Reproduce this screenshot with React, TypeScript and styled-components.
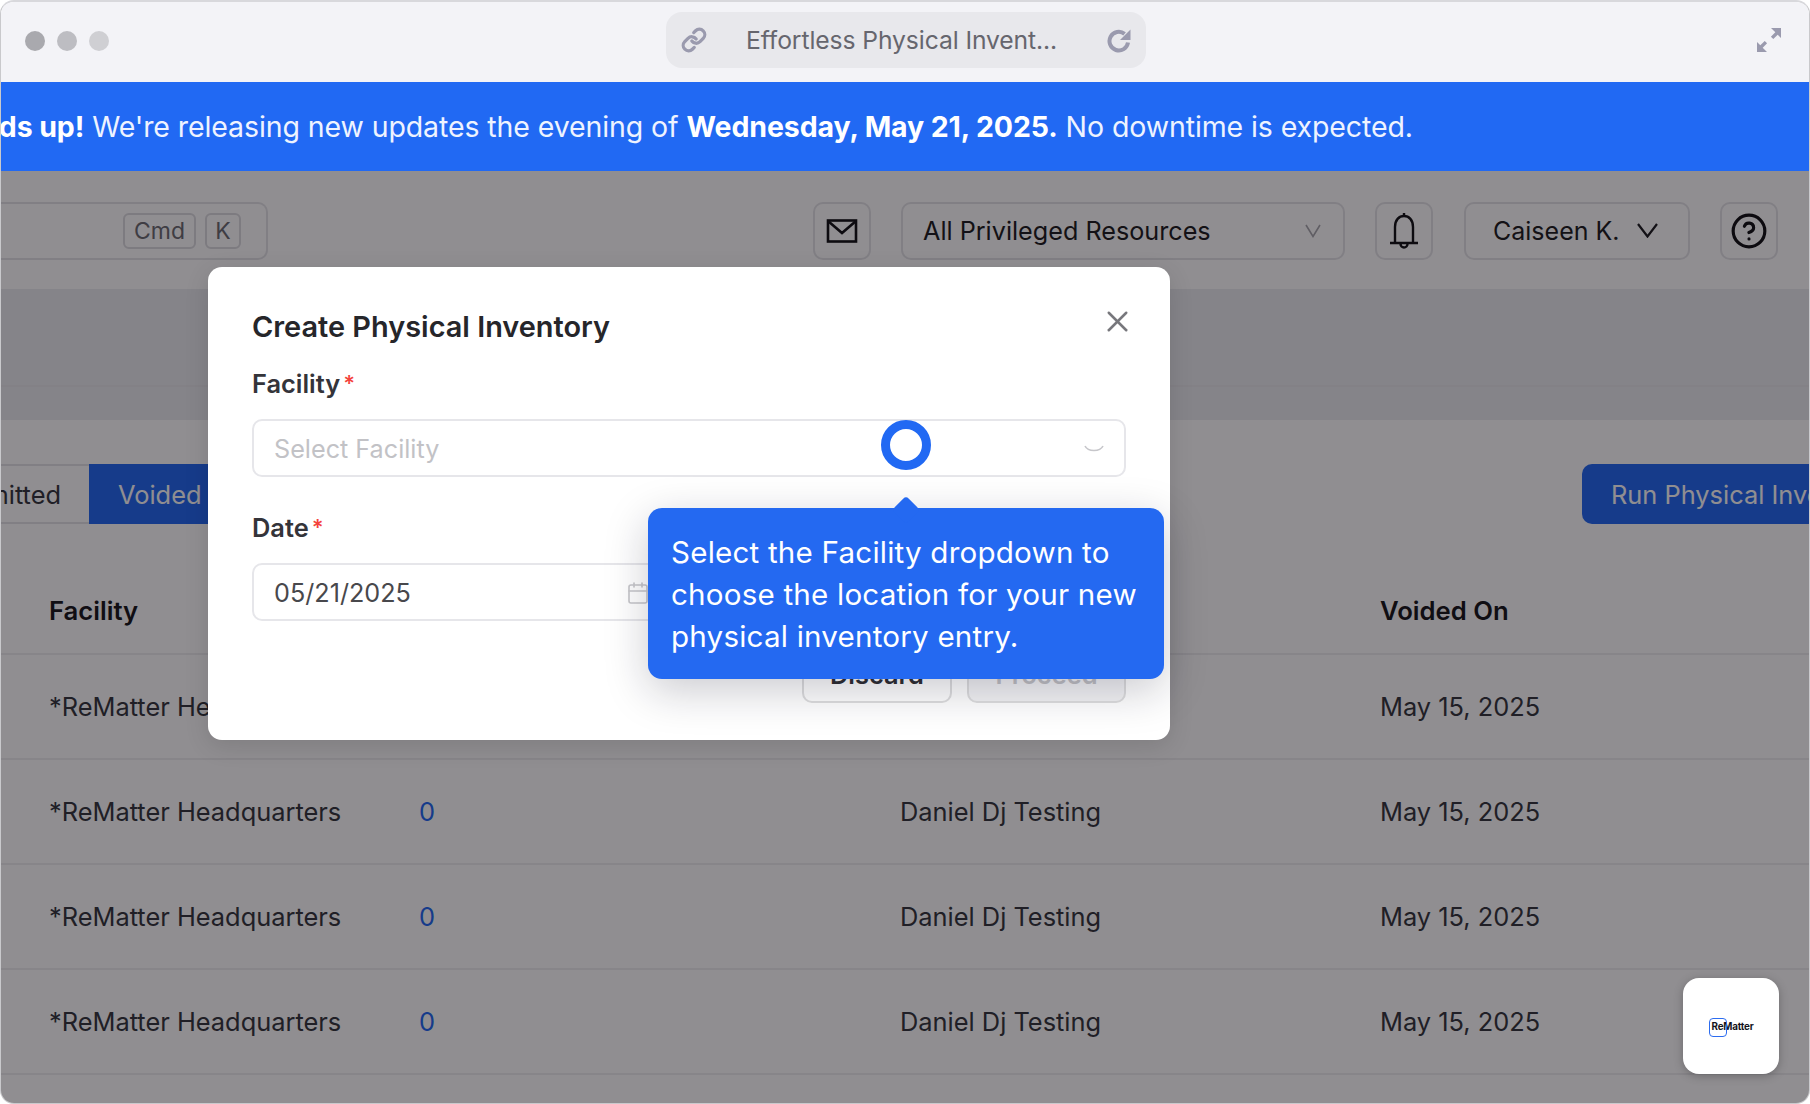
import React from "react";
import styled, { createGlobalStyle } from "styled-components";
import { Calendar, CircleHelp, Link, X } from "lucide-react";

const Global = createGlobalStyle`
  html, body { margin: 0; padding: 0; background: #ffffff; }
  * { box-sizing: border-box; }
  body { font-family: Inter, "Liberation Sans", sans-serif; }
`;

const Window = styled.div`
  position: relative;
  width: 1810px;
  height: 1104px;
  display: flex;
  flex-direction: column;
  overflow: hidden;
  border-radius: 14px;
  border: 1px solid #c9c9cc;
  border-top: 2px solid #d8d8dc;
  background: #fff;
`;

const Chrome = styled.header`
  height: 80px;
  flex: none;
  background: #f3f3f7;
  display: flex;
  align-items: center;
  padding: 0 27px 0 24px;
  position: relative;
`;

const Lights = styled.div`
  display: flex;
  gap: 12px;
  flex: none;
  margin-top: -2px;
`;

const Light = styled.span<{ $c: string }>`
  width: 20px;
  height: 20px;
  border-radius: 50%;
  background: ${(p) => p.$c};
`;

const AddressBar = styled.div`
  width: 480px;
  height: 56px;
  margin-left: 557px;
  margin-top: -4px;
  border-radius: 16px;
  background: #e8e8ec;
  display: flex;
  align-items: center;
  padding: 0 14px 0 15px;
  color: #9a9aae;
`;

const AddressText = styled.span`
  flex: 1;
  margin-left: 39px;
  font-size: 24.7px;
  letter-spacing: -0.1px;
  color: #66666e;
  white-space: nowrap;
`;

const ExpandIcon = styled.svg`
  margin-left: auto;
  margin-top: -4px;
  color: #9a9aae;
`;

const Banner = styled.div`
  height: 89px;
  flex: none;
  background: #2169f3;
  color: #eef3ff;
  display: flex;
  align-items: center;
  font-size: 28.5px;
  letter-spacing: -0.1px;
  white-space: nowrap;
  overflow: hidden;
`;

const BannerText = styled.span`
  margin-left: -57px;
  b { font-weight: 700; color: #fff; }
`;

const AppArea = styled.main`
  position: relative;
  flex: 1;
  min-height: 0;
  display: flex;
  flex-direction: column;
`;

const Topbar = styled.div`
  height: 118px;
  flex: none;
  display: flex;
  align-items: center;
  gap: 30px;
  padding: 1px 31px 0 0;
`;

const SearchBox = styled.div`
  width: 267px;
  height: 58px;
  border: 2px solid #e4e4e8;
  border-left: none;
  border-radius: 0 10px 10px 0;
  display: flex;
  align-items: center;
  justify-content: flex-end;
  gap: 9px;
  padding-right: 25px;
  margin-right: auto;
`;

const Kbd = styled.span<{ $w: number }>`
  width: ${(p) => p.$w}px;
  height: 36px;
  border: 2px solid #dcdce0;
  border-radius: 6px;
  display: flex;
  align-items: center;
  justify-content: center;
  font-size: 23px;
  color: #6c6c72;
`;

const IconButton = styled.button`
  width: 58px;
  height: 58px;
  padding: 0;
  flex: none;
  background: transparent;
  border: 2px solid #e4e4e8;
  border-radius: 10px;
  display: flex;
  align-items: center;
  justify-content: center;
  color: #111114;
`;

const ResourceSelect = styled.div`
  width: 444px;
  height: 58px;
  border: 2px solid #e4e4e8;
  border-radius: 10px;
  display: flex;
  align-items: center;
  justify-content: space-between;
  padding: 0 22px 0 20px;
  font-size: 25.2px;
  color: #1c1c20;
  svg { color: #a8a8ae; }
`;

const UserButton = styled.div`
  width: 226px;
  height: 58px;
  margin-left: 1px;
  border: 2px solid #e4e4e8;
  border-radius: 10px;
  display: flex;
  align-items: center;
  justify-content: space-between;
  padding: 0 30px 0 27px;
  font-size: 25px;
  color: #1c1c20;
`;

const Strip = styled.div<{ $h: number; $line?: boolean }>`
  height: ${(p) => p.$h}px;
  flex: none;
  background: #ebedf1;
  ${(p) => (p.$line ? "border-bottom: 2px solid #e7e8ec;" : "")}
`;

const TabsRow = styled.div`
  flex: none;
  display: flex;
  align-items: stretch;
  height: 60px;
  margin-top: 44px;
  margin-bottom: 43px;
`;

const Tab = styled.div<{ $active?: boolean }>`
  height: 60px;
  display: flex;
  align-items: center;
  font-size: 25.4px;
  white-space: nowrap;
  overflow: hidden;
  flex: none;
  justify-content: ${(p) => (p.$active ? "flex-start" : "flex-end")};
  width: ${(p) => (p.$active ? "140px" : "88px")};
  padding: ${(p) => (p.$active ? "0 10px 0 29px" : "0 28px 0 0")};
  background: ${(p) => (p.$active ? "#2169f3" : "transparent")};
  color: ${(p) => (p.$active ? "#ffffff" : "#33363c")};
  border-top: ${(p) => (p.$active ? "0" : "2px solid #e4e4e8")};
  border-bottom: ${(p) => (p.$active ? "0" : "2px solid #e4e4e8")};
`;

const RunButton = styled.div`
  margin-left: auto;
  margin-right: -113px;
  flex: none;
  width: 340px;
  height: 60px;
  background: #2169f3;
  color: #fff;
  border-radius: 10px;
  display: flex;
  align-items: center;
  padding: 0 29px;
  font-size: 25.4px;
  white-space: nowrap;
`;

const TableRow = styled.div<{ $head?: boolean }>`
  flex: none;
  display: grid;
  grid-template-columns: 370px 481px 480px 1fr;
  align-items: center;
  height: ${(p) => (p.$head ? "88px" : "105px")};
  padding-left: 48px;
  border-bottom: 2px solid #eeeef1;
  font-size: ${(p) => (p.$head ? "25.7px" : "25.4px")};
  font-weight: ${(p) => (p.$head ? 600 : 400)};
  color: ${(p) => (p.$head ? "#16161a" : "#33363c")};
  white-space: nowrap;
`;

const CountLink = styled.span`
  color: #2169f3;
`;

const Overlay = styled.div`
  position: absolute;
  inset: 0;
  background: rgba(8, 4, 10, 0.45);
`;

const Modal = styled.section`
  position: absolute;
  left: 207px;
  top: 96px;
  width: 962px;
  padding: 42px 44px 37px;
  border-radius: 14px;
  background: #fff;
  box-shadow: 0 6px 24px rgba(0, 0, 0, 0.12);
  display: flex;
  flex-direction: column;
`;

const Title = styled.h2`
  margin: 0;
  font-size: 28.9px;
  line-height: 36px;
  font-weight: 600;
  color: #26262a;
`;

const CloseButton = styled.span`
  position: absolute;
  top: 37px;
  right: 35px;
  display: flex;
  color: #77777c;
`;

const Label = styled.label<{ $mt: number }>`
  margin-top: ${(p) => p.$mt}px;
  font-size: 25.4px;
  line-height: 32px;
  font-weight: 600;
  color: #34343a;
  sup {
    color: #f4433c;
    font-size: 22px;
    line-height: 0;
    margin-left: 3px;
    vertical-align: 2px;
  }
`;

const Field = styled.div<{ $w?: number; $mt: number }>`
  width: ${(p) => (p.$w ? `${p.$w}px` : "100%")};
  margin-top: ${(p) => p.$mt}px;
  height: 58px;
  flex: none;
  border: 2px solid #e6e6ea;
  border-radius: 10px;
  display: flex;
  align-items: center;
  justify-content: space-between;
  padding: 1px 20px 0;
  font-size: 25.2px;
  color: #48484c;
  svg { color: #c6c6ca; }
`;

const Placeholder = styled.span`
  color: #c2c2c6;
`;

const Actions = styled.div`
  margin-top: 24px;
  display: flex;
  justify-content: flex-end;
  gap: 15px;
`;

const ActionButton = styled.div<{ $w: number; $off?: boolean }>`
  width: ${(p) => p.$w}px;
  height: 58px;
  border: 2px solid #dededf;
  border-radius: 10px;
  display: flex;
  align-items: center;
  justify-content: center;
  font-size: 25.4px;
  font-weight: 600;
  color: ${(p) => (p.$off ? "#c0c0c4" : "#2e2e32")};
  background: ${(p) => (p.$off ? "#f3f3f5" : "#fff")};
`;

const Beacon = styled.span`
  position: absolute;
  left: 673px;
  top: 153px;
  width: 50px;
  height: 50px;
  border-radius: 50%;
  border: 9px solid #2169f3;
  background: #fff;
`;

const Tooltip = styled.div`
  position: absolute;
  left: 440px;
  top: 241px;
  width: 516px;
  height: 171px;
  padding: 23px 20px 0 23px;
  border-radius: 14px;
  background: #2469f1;
  color: #fff;
  font-size: 29.6px;
  line-height: 42px;
  letter-spacing: 0.2px;
  box-shadow: 0 12px 44px rgba(20, 20, 40, 0.22);
  &::before {
    content: "";
    position: absolute;
    left: 248px;
    top: -8px;
    width: 20px;
    height: 20px;
    border-radius: 4px;
    background: #2469f1;
    transform: rotate(45deg);
  }
`;

const Widget = styled.div`
  position: absolute;
  right: 30px;
  bottom: 29px;
  width: 96px;
  height: 96px;
  border-radius: 16px;
  background: #fff;
  box-shadow: 0 2px 10px rgba(0, 0, 0, 0.25);
  display: flex;
  align-items: center;
  justify-content: center;
`;

const LogoMark = styled.div`
  position: relative;
  padding-left: 3px;
  font-size: 9.8px;
  font-weight: 700;
  letter-spacing: -0.2px;
  color: #14141c;
  line-height: 17px;
  white-space: nowrap;
  &::before {
    content: "";
    position: absolute;
    left: 0;
    top: 0;
    width: 16px;
    height: 17px;
    border: 1.5px solid #2c6cf0;
    border-radius: 4px;
  }
`;

const rows = [0, 1, 2, 3];

function VChevron({ w, h, sw }: { w: number; h: number; sw: number }) {
  return (
    <svg width={w} height={h} viewBox={`0 0 ${w} ${h}`} fill="none" stroke="currentColor" strokeWidth={sw}>
      <path d={`M1 1 ${w / 2} ${h - 1.5} ${w - 1} 1`} />
    </svg>
  );
}

export default function App() {
  return (
    <Window>
      <Global />
      <Chrome>
        <Lights>
          <Light $c="#a9a9ae" />
          <Light $c="#bdbdc2" />
          <Light $c="#cfcfd3" />
        </Lights>
        <AddressBar>
          <Link size={26} strokeWidth={3} />
          <AddressText>Effortless Physical Invent...</AddressText>
          <svg width="26" height="26" viewBox="0 0 26 26" fill="none" stroke="currentColor" strokeWidth="4">
            <path d="M22 15.5a9.3 9.3 0 1 1-3.4-8.6" />
            <path d="M24.5 2.5v10.5H14z" fill="currentColor" stroke="none" />
          </svg>
        </AddressBar>
        <ExpandIcon width="26" height="26" viewBox="0 0 26 26" fill="currentColor" stroke="none">
          <path d="M15 1h10v10l-3.3-3.3-4.4 4.4-2.4-2.4 4.4-4.4zM11 25H1V15l3.3 3.3 4.4-4.4 2.4 2.4-4.4 4.4z" />
        </ExpandIcon>
      </Chrome>
      <Banner>
        <BannerText>
          <b>Heads up!</b> We're releasing new updates the evening of <b>Wednesday, May 21, 2025.</b> No downtime is expected.
        </BannerText>
      </Banner>
      <AppArea>
        <Topbar>
          <SearchBox>
            <Kbd $w={73}>Cmd</Kbd>
            <Kbd $w={36}>K</Kbd>
          </SearchBox>
          <IconButton aria-label="Messages">
            <svg width="32" height="26" viewBox="0 0 32 26" fill="none" stroke="currentColor" strokeWidth="2.6">
              <rect x="2" y="2.5" width="28" height="21" />
              <path d="M2 3 16 15 30 3" />
            </svg>
          </IconButton>
          <ResourceSelect>
            All Privileged Resources
            <VChevron w={16} h={14} sw={1.6} />
          </ResourceSelect>
          <IconButton aria-label="Notifications">
            <svg width="30" height="38" viewBox="0 0 30 38" fill="none" stroke="currentColor" strokeWidth="2.4">
              <path d="M6 30V15C6 8 10 4 15 4s9 4 9 11v15" />
              <path d="M1 31h28M15 1v3.500M11.500 32a3.500 3.500 0 0 0 7 0" />
            </svg>
          </IconButton>
          <UserButton>
            Caiseen K.
            <VChevron w={21} h={15} sw={2.2} />
          </UserButton>
          <IconButton aria-label="Help">
            <CircleHelp size={38} strokeWidth={2} />
          </IconButton>
        </Topbar>
        <Strip $h={98} $line />
        <Strip $h={33} />
        <TabsRow>
          <Tab>Submitted</Tab>
          <Tab $active>Voided</Tab>
          <RunButton>Run Physical Inventory</RunButton>
        </TabsRow>
        <TableRow $head>
          <span>Facility</span>
          <span />
          <span />
          <span>Voided On</span>
        </TableRow>
        {rows.map((r) => (
          <TableRow key={r}>
            <span>*ReMatter Headquarters</span>
            <CountLink>0</CountLink>
            <span>Daniel Dj Testing</span>
            <span>May 15, 2025</span>
          </TableRow>
        ))}
        <Overlay />
        <Modal>
          <Title>Create Physical Inventory</Title>
          <CloseButton>
            <X size={35} strokeWidth={1.7} />
          </CloseButton>
          <Label $mt={23}>
            Facility<sup>*</sup>
          </Label>
          <Field $mt={19}>
            <Placeholder>Select Facility</Placeholder>
            <svg width="20" height="8" viewBox="0 0 20 8" fill="none" stroke="currentColor" strokeWidth="1.6">
              <path d="M1 1c3 6 15 6 18 0" />
            </svg>
          </Field>
          <Label $mt={35}>
            Date<sup>*</sup>
          </Label>
          <Field $w={420} $mt={19}>
            05/21/2025
            <Calendar size={24} strokeWidth={1.6} />
          </Field>
          <Actions>
            <ActionButton $w={150}>Discard</ActionButton>
            <ActionButton $w={159} $off>Proceed</ActionButton>
          </Actions>
          <Beacon />
          <Tooltip>Select the Facility dropdown to choose the location for your new physical inventory entry.</Tooltip>
        </Modal>
        <Widget>
          <LogoMark>ReMatter</LogoMark>
        </Widget>
      </AppArea>
    </Window>
  );
}
